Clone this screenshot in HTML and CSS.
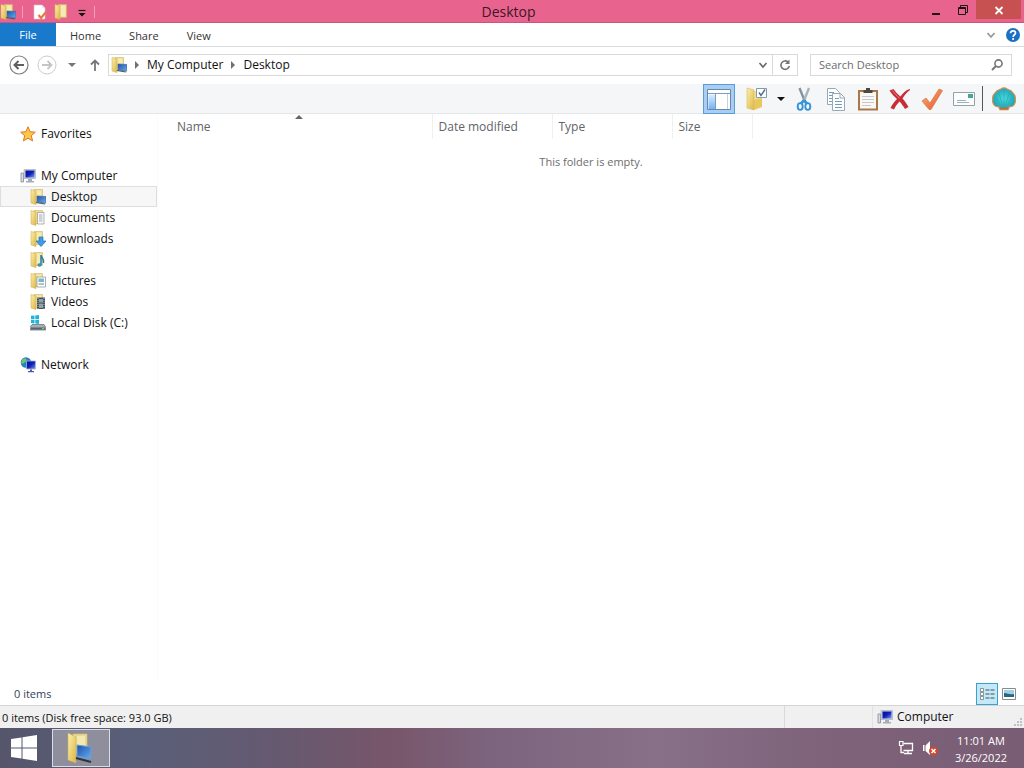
FILE: index.html
```html
<!DOCTYPE html>
<html lang="en">
<head>
    <meta charset="UTF-8">
    <meta name="viewport" content="width=device-width, initial-scale=1.0">
    <title>Desktop</title>
    <link rel="stylesheet" href="styles.css">
</head>
<body>
    <!-- Shared icons -->
    <svg class="sprite" aria-hidden="true">
        <defs>
            <linearGradient id="gold" x1="0" y1="0" x2="1" y2="1">
                <stop offset="0" stop-color="#fcf0a8"/>
                <stop offset="1" stop-color="#dcb648"/>
            </linearGradient>
            <linearGradient id="screen" x1="0" y1="0" x2="1" y2="1">
                <stop offset="0" stop-color="#1c4fac"/>
                <stop offset="1" stop-color="#68aef0"/>
            </linearGradient>
            <linearGradient id="navy" x1="0" y1="0" x2="1" y2="1">
                <stop offset="0" stop-color="#0808a0"/>
                <stop offset="0.5" stop-color="#1020b8"/>
                <stop offset="1" stop-color="#78a0f8"/>
            </linearGradient>
            <linearGradient id="orange" x1="0" y1="0" x2="1" y2="1">
                <stop offset="0" stop-color="#ffb070"/>
                <stop offset="1" stop-color="#dc5830"/>
            </linearGradient>
            <linearGradient id="pane" x1="0" y1="0" x2="0" y2="1">
                <stop offset="0" stop-color="#d8ecff"/>
                <stop offset="1" stop-color="#70b4f8"/>
            </linearGradient>
            <radialGradient id="aqua">
                <stop offset="0" stop-color="#48dce4"/>
                <stop offset="1" stop-color="#1ca4b4"/>
            </radialGradient>
        </defs>
        <symbol id="folder" viewBox="0 0 16 16">
            <path d="M4 .5h8.500v13H4z" fill="#ecd986" stroke="#d0b664" stroke-width=".6"/>
            <path d="M6.500 1.500h5v11h-5z" fill="#f6ebb4"/>
            <path d="M1 .5l5 1.500v13.500L1 14z" fill="url(#gold)" stroke="#d4b45c" stroke-width=".6"/>
        </symbol>
        <symbol id="folder-desktop" viewBox="0 0 16 16">
            <use href="#folder"/>
            <path d="M7 7l9 .5v6.500l-9-1z" fill="url(#screen)" stroke="#496a8c" stroke-width=".7"/>
            <path d="M6 13.500l9 1.500" stroke="#48586c" stroke-width="1.200"/>
        </symbol>
        <symbol id="computer" viewBox="0 0 16 16">
            <path d="M1 5h2.500v9H1z" fill="#d8dce2" stroke="#838b98" stroke-width=".8"/>
            <path d="M4 1.500h11.500v9H4z" fill="#ced4dd" stroke="#a0a8b4" stroke-width=".6"/>
            <path d="M5.500 2.500h9v7h-9z" fill="url(#navy)"/>
            <path d="M8 11h4v2H8zM6 13h8v1.500H6z" fill="#a6adb8"/>
        </symbol>
    </svg>

    <div class="window">
        <header class="titlebar">
            <div class="quick-access">
                <svg class="icon" viewBox="0 0 16 16"><use href="#folder-desktop"/></svg>
                <span class="divider"></span>
                <button type="button" aria-label="Properties">
                    <svg class="icon" viewBox="0 0 16 16"><path d="M2 1h8l3 3v11H2z" fill="#fff" stroke="#d9c4cc" stroke-width=".6"/><path d="M10 1v3h3" fill="#e4e4ea"/><path d="M6.500 11l2.500 3 5-6" fill="none" stroke="#e37b3c" stroke-width="2.200"/></svg>
                </button>
                <button type="button" aria-label="New folder">
                    <svg class="icon" viewBox="0 0 16 16"><use href="#folder"/></svg>
                </button>
                <button class="small" type="button" aria-label="Customize">
                    <svg class="icon" viewBox="0 0 16 16"><path d="M4.500 6.500h7" stroke="#111" stroke-width="1.200"/><path d="M4.500 9h7L8 12.500z" fill="#111"/></svg>
                </button>
                <span class="divider"></span>
            </div>
            <h1>Desktop</h1>
            <div class="window-controls">
                <button type="button" aria-label="Minimize"><svg class="icon" viewBox="0 0 16 16"><path d="M4 12h8" stroke="#1c1218" stroke-width="2"/></svg></button>
                <button type="button" aria-label="Restore"><svg class="icon" viewBox="0 0 16 16"><path d="M3.500 5.500h7v7h-7zM5.500 5V3.500h7v7H11M3.500 6.500h7" fill="none" stroke="#1c1218"/></svg></button>
                <button class="close" type="button" aria-label="Close"><svg class="icon" viewBox="0 0 16 16"><path d="M4.500 5l7 7M11.500 5l-7 7" stroke="#fff" stroke-width="1.800"/></svg></button>
            </div>
        </header>

        <nav class="ribbon">
            <button class="file" type="button">File</button>
            <button type="button">Home</button>
            <button type="button">Share</button>
            <button type="button">View</button>
            <div class="ribbon-end">
                <button type="button" aria-label="Expand ribbon"><svg class="icon" viewBox="0 0 16 16"><path d="M4.500 6L8 10l3.500-4" fill="none" stroke="#999" stroke-width="1.800"/></svg></button>
                <button type="button" aria-label="Help"><svg class="icon" viewBox="0 0 16 16"><circle cx="8" cy="8" r="7" fill="#1c70c4"/><path d="M5.500 6.200c0-3.200 5-3 5-.2 0 1.800-2.400 1.700-2.400 4" fill="none" stroke="#fff" stroke-width="1.700"/><circle cx="8.100" cy="12" r="1.100" fill="#fff"/></svg></button>
            </div>
        </nav>

        <div class="address-row">
            <button type="button" aria-label="Back"><svg class="icon-big" viewBox="0 0 20 20"><circle cx="10" cy="10" r="9" fill="#fff" stroke="#808080" stroke-width="1.200"/><path d="M15 10H6M9.500 6l-4 4 4 4" fill="none" stroke="#606060" stroke-width="2"/></svg></button>
            <button type="button" aria-label="Forward"><svg class="icon-big" viewBox="0 0 20 20"><circle cx="10" cy="10" r="9" fill="#fff" stroke="#ccc"/><path d="M5 10h9M10.500 6l4 4-4 4" fill="none" stroke="#c8c4c6" stroke-width="1.800"/></svg></button>
            <button type="button" aria-label="Recent locations"><svg class="icon" viewBox="0 0 16 16"><path d="M4 6h8l-4 4z" fill="#777"/></svg></button>
            <button type="button" aria-label="Up"><svg class="icon" viewBox="0 0 16 16"><path d="M8 14V4M4 7.500L8 3.500l4 4" fill="none" stroke="#777" stroke-width="1.800"/></svg></button>
            <div class="address">
                <svg class="icon" viewBox="0 0 16 16"><use href="#folder-desktop"/></svg>
                <svg class="arrow" viewBox="0 0 8 8"><path d="M2 0l4 4-4 4z" fill="#707070"/></svg>
                <a href="#">My Computer</a>
                <svg class="arrow" viewBox="0 0 8 8"><path d="M2 0l4 4-4 4z" fill="#707070"/></svg>
                <a href="#">Desktop</a>
                <button class="history" type="button" aria-label="Previous locations"><svg class="icon" viewBox="0 0 16 16"><path d="M4.500 6L8 10l3.500-4" fill="none" stroke="#666" stroke-width="1.600"/></svg></button>
                <button class="refresh" type="button" aria-label="Refresh"><svg class="icon" viewBox="0 0 16 16"><path d="M11 5a4.200 4.200 0 1 0 1.300 4" fill="none" stroke="#777" stroke-width="1.600"/><path d="M12.500 2.500v4.500H8z" fill="#777"/></svg></button>
            </div>
            <div class="search">
                <input type="text" aria-label="Search Desktop" placeholder="Search Desktop">
                <svg class="icon" viewBox="0 0 16 16"><circle cx="9.500" cy="6.500" r="3.600" fill="none" stroke="#777" stroke-width="1.600"/><path d="M7 9l-4 4" stroke="#777" stroke-width="2"/></svg>
            </div>
        </div>

        <div class="toolbar">
            <button class="active" type="button" aria-label="Navigation pane"><svg viewBox="0 0 24 24"><path d="M.5 2.500h23v20H.5z" fill="#fff" stroke="#6888a8"/><path d="M1.500 7.500H8V22H1.500z" fill="url(#pane)"/><path d="M1 6.500h22M8.500 7v15" stroke="#7f9cb8"/><path d="M20.500 7v15" stroke="#c4d4e4"/></svg></button>
            <button class="select" type="button" aria-label="Select"><svg viewBox="0 0 24 24"><path d="M8 4h8v15H8z" fill="#f0dfa0"/><path d="M9 13l8-2v9l-8 3z" fill="#e8c85c"/><path d="M2 1l7 2v20l-7-2z" fill="url(#gold)" stroke="#d8b85c" stroke-width=".6"/><path d="M11.500 1.500h10v9h-10z" fill="#fff" stroke="#829aaa"/><path d="M14 5.500l2 3 4-6" fill="none" stroke="#507088" stroke-width="1.500"/></svg></button>
            <button class="more" type="button" aria-label="Select options"><svg class="icon" viewBox="0 0 16 16"><path d="M4 6h8l-4 4z" fill="#111"/></svg></button>
            <button type="button" aria-label="Cut"><svg viewBox="0 0 24 24"><path d="M7.500 1l6 15" stroke="#8593a0" stroke-width="2.400"/><path d="M17 1l-6 15" stroke="#a8b3bd" stroke-width="2.400"/><path d="M12 13l-3.500 4M12 13l3.500 4" stroke="#3494d8" stroke-width="2.600"/><ellipse cx="8.200" cy="19.500" rx="2.500" ry="3.400" fill="none" stroke="#3494d8" stroke-width="1.900"/><ellipse cx="15.800" cy="19.500" rx="2.500" ry="3.400" fill="none" stroke="#3494d8" stroke-width="1.900"/></svg></button>
            <button type="button" aria-label="Copy"><svg viewBox="0 0 24 24"><g fill="#fff" stroke="#98a8b4"><path d="M3.500 1.500h8l4 4v12h-12z"/><path d="M8.500 6.500h8l4 4v13h-12z"/></g><path d="M16 6.500V11h4.500" fill="none" stroke="#98a8b4"/><path d="M5 5.500h5M5 8.500h3M5 11.500h3M5 14.500h3M11 11.500h4M11 14.500h7M11 17.500h7M11 20.500h7" stroke="#6f9dc4"/></svg></button>
            <button type="button" aria-label="Paste"><svg viewBox="0 0 24 24"><path d="M2 3h20v20.500H2z" fill="#a87848"/><path d="M4 5h16v16.500H4z" fill="#faf8f4"/><path d="M7.500 6V3H10V1h4v2h2.500v3z" fill="#4c4840"/><path d="M6 9.500h12M6 12.500h12M6 15.500h12M6 18.500h9" stroke="#c6c8cc"/></svg></button>
            <button type="button" aria-label="Delete"><svg viewBox="0 0 24 24"><path d="M1.500 3.500L5.500 2c2 3 4 5 7 7.500C15 6 18 3 22 2v1c-3 2-5.500 5-7.500 8.500 2 2 4 5 6 8.500l-3.500 2c-2-3-3.500-5.500-5.500-7.500-2.500 2.500-4 5-5.500 8L2.500 21c1.500-3.500 4-6.500 6.500-9-3-2.500-5-5-7.500-8.500z" fill="#c82c34"/><path d="M4.500 3.500c2 3 4 5 7 7.500" fill="none" stroke="#e88c8c"/></svg></button>
            <button type="button" aria-label="Rename"><svg viewBox="0 0 24 24"><path d="M2 14l4-3 4 5L19 2l3.500 1.500L11 22.500H9z" fill="url(#orange)" stroke="#e0784c" stroke-width=".8"/></svg></button>
            <button type="button" aria-label="E-mail"><svg viewBox="0 0 24 24"><path d="M1.500 5.500h21v13h-21z" fill="#fcfdfd" stroke="#98a0a4"/><path d="M16 7h5v4h-5z" fill="#48a49c"/><path d="M5 13.500h9M5 15.500h12" stroke="#9cb0bc"/></svg></button>
            <span class="toolbar-divider"></span>
            <button class="shell" type="button" aria-label="Classic Shell settings"><svg viewBox="0 0 24 24"><path d="M8 22.500l-1.500-3C3 20 0 17 .8 12 0 8 3 6 4 5c1-2 4-2 5-3 2-1.500 4-1.500 6 0 1 1 4 1 5 3 1 1 4 3 3.200 7 .8 5-2.200 8-5.700 7.500l-1.500 3z" fill="url(#aqua)" stroke="#c89058" stroke-width="1.300"/><path d="M12 21V4M11 20L7 6M13 20l4-14M9 19L4 10M15 19l5-9" stroke="#2ca8b0" stroke-width=".7"/><path d="M7.500 20.500h9l-1 2h-7z" fill="#b87040"/></svg></button>
        </div>

        <main class="content">
            <nav class="tree">
                <ul>
                    <li><a href="#"><svg class="icon" viewBox="0 0 16 16"><path d="M8 .8l2.100 4.900 5.200.5-4 3.500 1.300 5.200L8 12.200l-4.600 2.700 1.300-5.200-4-3.500 5.200-.5z" fill="#ffc64c" stroke="#dc7824" stroke-width="1"/></svg>Favorites</a></li>
                </ul>
                <ul>
                    <li><a href="#"><svg class="icon" viewBox="0 0 16 16"><use href="#computer"/></svg>My Computer</a></li>
                    <li><a class="child selected" href="#"><svg class="icon" viewBox="0 0 16 16"><use href="#folder-desktop"/></svg>Desktop</a></li>
                    <li><a class="child" href="#"><svg class="icon" viewBox="0 0 16 16"><use href="#folder"/><path d="M7.500 2.500h6.500v11.500H7.500z" fill="#fafafa" stroke="#929292" stroke-width=".7"/><path d="M9 5h3.500M9 7h3.500M9 9h3.500M9 11h3.500" stroke="#8c98a8" stroke-width=".8"/></svg>Documents</a></li>
                    <li><a class="child" href="#"><svg class="icon" viewBox="0 0 16 16"><use href="#folder"/><path d="M9 6h4v4h3l-5 5.500L6 10h3z" fill="#3c9ce4" stroke="#2070b4" stroke-width=".7"/></svg>Downloads</a></li>
                    <li><a class="child" href="#"><svg class="icon" viewBox="0 0 16 16"><use href="#folder"/><path d="M11 13V3c0 3 3.500 3 2.500 8" fill="none" stroke="#287ca4" stroke-width="1.500"/><ellipse cx="9.500" cy="13" rx="2.200" ry="1.700" fill="#3494bc"/></svg>Music</a></li>
                    <li><a class="child" href="#"><svg class="icon" viewBox="0 0 16 16"><use href="#folder"/><path d="M7 4h8.500v10H7z" fill="#fff" stroke="#7c8c98" stroke-width=".7"/><path d="M8.500 5.500H14V9H8.500z" fill="#7cb4cc"/><path d="M8.500 11H14" stroke="#688c70"/></svg>Pictures</a></li>
                    <li><a class="child" href="#"><svg class="icon" viewBox="0 0 16 16"><use href="#folder"/><path d="M7 3.500h8V15H7z" fill="#444c54"/><path d="M9 5h4v3.500H9zM9 9.500h4V14H9z" fill="#8ca4ac"/><path d="M8 4v11M14 4v11" stroke="#d4d8dc" stroke-width=".8" stroke-dasharray="1 1"/></svg>Videos</a></li>
                    <li><a class="child" href="#"><svg class="icon" viewBox="0 0 16 16"><path d="M1 .8l3.500-.3v3.700H1zM5.300.4l3.700-.4v4.200H5.300zM1 5h3.500v3.500L1 8zM5.300 5H9v4l-3.700-.4z" fill="#20b4d8"/><path d="M2 9.500h12l2 3v2.500H0v-2.500z" fill="#a4aeb4" stroke="#606c74" stroke-width=".7"/><path d="M1 12.500h14v2H1z" fill="#54646c"/><path d="M12 13.500h2" stroke="#50e870"/></svg>Local Disk (C:)</a></li>
                </ul>
                <ul>
                    <li><a href="#"><svg class="icon" viewBox="0 0 16 16"><circle cx="6" cy="5.500" r="5.300" fill="#2484bc"/><path d="M2 3c3-3 6-1 4 1.500-2 1-3 3-5 2zM6 6c3-1 3 2 1 4z" fill="#70c478"/><path d="M6.500 4h9v8h-9z" fill="url(#navy)" stroke="#a8b4d0" stroke-width=".8"/><path d="M10 12.500h2V14H10zM8 14h6v1.300H8z" fill="#505c98"/></svg>Network</a></li>
                </ul>
            </nav>
            <section class="files">
                <table>
                    <thead>
                        <tr>
                            <th class="name">Name<svg class="sort" viewBox="0 0 8 4"><path d="M0 4l4-4 4 4z" fill="#666"/></svg></th>
                            <th class="date">Date modified</th>
                            <th class="type">Type</th>
                            <th class="size">Size</th>
                            <th class="rest"></th>
                        </tr>
                    </thead>
                    <tbody>
                        <tr><td colspan="5">This folder is empty.</td></tr>
                    </tbody>
                </table>
            </section>
        </main>

        <div class="details">
            <span>0 items</span>
            <div class="view-modes">
                <button class="active" type="button" aria-label="Details view"><svg class="icon" viewBox="0 0 16 16"><path d="M1.500 2.500h3v3h-3zM1.500 6.500h3v3h-3zM1.500 10.500h3v3h-3z" fill="#fff" stroke="#6c7c84" stroke-width=".8"/><path d="M6.500 4h4M11.500 4h4M6.500 8h4M11.500 8h4M6.500 12h4M11.500 12h4" stroke="#405058"/></svg></button>
                <button type="button" aria-label="Thumbnail view"><svg class="icon" viewBox="0 0 16 16"><path d="M1.500 2.500h13v11h-13z" fill="#fff" stroke="#848c90"/><path d="M3 4h10v7H3z" fill="#9cd0e4"/><path d="M3 7c4 0 5 2 10 1v3H3z" fill="#2c647c"/></svg></button>
            </div>
        </div>

        <footer class="statusbar">
            <span class="status-text">0 items (Disk free space: 93.0 GB)</span>
            <span class="status-blank"></span>
            <span class="status-zone">
                <svg class="icon" viewBox="0 0 16 16"><use href="#computer"/></svg>Computer
                <svg class="grip" viewBox="0 0 10 10"><path d="M7 1h2v2H7zM4 4h2v2H4zM7 4h2v2H7zM1 7h2v2H1zM4 7h2v2H4zM7 7h2v2H7z" fill="#c0c0c0"/></svg>
            </span>
        </footer>
    </div>

    <div class="taskbar">
        <button class="start" type="button" aria-label="Start"><svg viewBox="0 0 28 28"><path d="M1 5l10.500-1.500v10H1zM12.500 3.300L27 1v12.500H12.500zM1 14.500h10.500v10L1 23zM12.500 14.500H27V27l-14.500-2.300z" fill="#fff"/></svg></button>
        <button class="task" type="button" aria-label="Desktop window"><svg viewBox="0 0 32 32"><path d="M8 2h14v20H8z" fill="#e9d88e" stroke="#d8c47c" stroke-width=".6"/><path d="M12 4h8v17h-8z" fill="#f3e8ae"/><path d="M3 1l8 4v26l-8-3z" fill="url(#gold)" stroke="#d2b45c" stroke-width=".6"/><path d="M12 13l14 2v12l-14-3z" fill="url(#screen)" stroke="#68a0d4"/><path d="M11 26l15 4" stroke="#283544" stroke-width="2"/></svg></button>
        <div class="tray">
            <button type="button" aria-label="Network"><svg class="icon" viewBox="0 0 16 16"><path d="M5.500 3.500h9v7h-9" fill="none" stroke="#fff" stroke-width="1.300"/><path d="M10 11v2M6 13.500h8M3 6v6.500h3" fill="none" stroke="#fff" stroke-width="1.300"/><path d="M1.500 1.500h3.500v4H1.500z" fill="#7c6078" stroke="#fff" stroke-width="1.200"/></svg></button>
            <button type="button" aria-label="Volume muted"><svg class="icon" viewBox="0 0 16 16"><path d="M1 5h1.500v6H1zM3.500 5.500L8 1v14l-4.500-4z" fill="#fff"/><circle cx="11.500" cy="11" r="4.500" fill="#d04830"/><path d="M9.500 9l4 4M13.500 9l-4 4" stroke="#fff" stroke-width="1.500"/></svg></button>
            <div class="clock"><time>11:01 AM</time><span>3/26/2022</span></div>
        </div>
    </div>
</body>
</html>
```
FILE: styles.css
```css
* {
    box-sizing: border-box;
}

body {
    margin: 0;
    min-height: 100vh;
    display: flex;
    flex-direction: column;
    font-family: "Open Sans", "Noto Sans", sans-serif;
    font-size: 12px;
    line-height: 16px;
    color: #111;
    background-color: #fff;
}

button {
    display: flex;
    align-items: center;
    justify-content: center;
    padding: 0;
    border: none;
    background: none;
    font: inherit;
    color: inherit;
}

a {
    color: inherit;
    text-decoration: none;
}

svg {
    display: block;
    flex: none;
}

.sprite {
    position: absolute;
    width: 0;
    height: 0;
}

.icon {
    width: 16px;
    height: 16px;
}

.window {
    flex: 1;
    display: flex;
    flex-direction: column;
}

/* Title bar */
.titlebar {
    display: grid;
    grid-template-columns: 1fr auto 1fr;
    height: 23px;
    padding-right: 3px;
    background-color: #e8648f;
    border-bottom: 1px solid #c9557c;
}

.titlebar h1 {
    margin: 0;
    padding-right: 4px;
    font-size: 14px;
    font-weight: 400;
    line-height: 23px;
    color: #3c1626;
}

.quick-access {
    display: flex;
    align-items: center;
    gap: 6px;
}

.quick-access .small {
    width: 12px;
}

.divider {
    width: 1px;
    height: 12px;
    background-color: #f0a0bc;
}

.quick-access .icon + .divider {
    margin-right: 3px;
}

.window-controls {
    display: flex;
    justify-content: flex-end;
}

.window-controls button {
    width: 27px;
    height: 19px;
}

.window-controls .close {
    width: 45px;
    background-color: #c75050;
}

/* Ribbon tabs */
.ribbon {
    display: flex;
    height: 24px;
    border-bottom: 1px solid #d8dadc;
    font-size: 11px;
    color: #333;
}

.ribbon button {
    padding: 2px 14px 0;
}

.ribbon .file {
    width: 56px;
    padding: 0;
    color: #fff;
    background-color: #1979ca;
}

.ribbon-end {
    display: flex;
    gap: 6px;
    margin-left: auto;
    padding-right: 3px;
}

.ribbon-end button {
    padding: 0;
}

/* Address bar */
.address-row {
    display: flex;
    align-items: center;
    gap: 8px;
    height: 37px;
    padding: 0 12px 1px 9px;
}

.address-row > button + button {
    margin-right: -1px;
}

.icon-big {
    width: 20px;
    height: 20px;
}

.address {
    flex: 1;
    display: flex;
    align-items: center;
    gap: 6px;
    height: 22px;
    margin-left: -2px;
    padding-left: 2px;
    border: 1px solid #d9d9d9;
}

.arrow {
    width: 8px;
    height: 8px;
}

.history {
    width: 18px;
    height: 20px;
    margin-left: auto;
}

.refresh {
    width: 25px;
    height: 20px;
    margin-left: -6px;
    border-left: 1px solid #d9d9d9;
}

.search {
    display: flex;
    align-items: center;
    width: 202px;
    height: 22px;
    margin-left: 4px;
    padding: 0 6px 0 8px;
    border: 1px solid #d9d9d9;
    font-size: 11px;
}

.search input {
    flex: 1;
    min-width: 0;
    padding: 0;
    border: none;
    outline: none;
    font: inherit;
}

.search input::placeholder {
    color: #6d6d6d;
    opacity: 1;
}

/* Toolbar */
.toolbar {
    display: flex;
    align-items: stretch;
    justify-content: flex-end;
    height: 30px;
    padding-right: 4px;
    background-color: #f5f6f7;
    border-bottom: 1px solid #e4e6e8;
}

.toolbar button {
    width: 32px;
    height: 30px;
}

.toolbar button svg {
    width: 24px;
    height: 24px;
}

.toolbar .active {
    background-color: #a9cef5;
    border: 1px solid #5a9bd8;
}

.toolbar .select {
    margin-left: 6px;
}

.toolbar .more {
    width: 15px;
}

.toolbar .more svg {
    width: 16px;
    height: 16px;
}

.toolbar-divider {
    width: 1px;
    margin: 2px 5px 2px 2px;
    background-color: #555;
}

/* Folder tree and file list */
.content {
    flex: 1;
    display: flex;
}

.tree {
    width: 158px;
    padding-top: 9px;
    border-right: 1px solid #fafafa;
}

.tree ul {
    list-style: none;
    margin: 0 0 21px;
    padding: 0;
}

.tree a {
    display: flex;
    align-items: center;
    gap: 5px;
    height: 21px;
    padding-left: 19px;
    border: 1px solid transparent;
}

.tree .child {
    padding-left: 29px;
}

.tree .selected {
    background-color: #f7f7f7;
    border-color: #dedede;
}

.files {
    flex: 1;
}

table {
    width: 100%;
    table-layout: fixed;
    border-collapse: collapse;
    color: #6d6d6d;
}

th {
    height: 17px;
    padding: 5px 6px 4px;
    border-right: 1px solid #f0f0f0;
    font-weight: 400;
    text-align: left;
    color: #606468;
}

.name {
    position: relative;
    width: 274px;
    padding-left: 19px;
}

.date,
.type {
    width: 120px;
}

.size {
    width: 80px;
}

.rest {
    border: none;
}

.sort {
    position: absolute;
    top: 1px;
    left: 50%;
    width: 8px;
    height: 4px;
}

td {
    padding: 15px 0 0;
    font-size: 11px;
    text-align: center;
}

/* Item count and view buttons */
.details {
    display: flex;
    align-items: center;
    justify-content: space-between;
    height: 23px;
    padding: 0 4px 0 14px;
    font-size: 11px;
    color: #33415c;
}

.view-modes {
    display: flex;
}

.view-modes button {
    width: 22px;
    height: 22px;
}

.view-modes .active {
    background-color: #c3e9f8;
    border: 1px solid #3ba2d0;
}

/* Status bar */
.statusbar {
    display: flex;
    height: 23px;
    background-color: #f0f0f0;
    border-top: 1px solid #d4d4d4;
    line-height: 24px;
}

.status-text {
    flex: 1;
    padding-left: 2px;
    font-size: 11px;
}

.status-blank {
    width: 88px;
    border-left: 1px solid #d9d9d9;
}

.status-zone {
    display: flex;
    align-items: center;
    gap: 4px;
    width: 152px;
    padding-left: 4px;
    border-left: 1px solid #e2e2e2;
}

.grip {
    width: 10px;
    height: 10px;
    margin: 0 1px 1px auto;
    align-self: flex-end;
}

/* Taskbar */
.taskbar {
    display: flex;
    align-items: center;
    height: 40px;
    background-image: linear-gradient(90deg, #55566c 0%, #5a5f79 14%, #655970 27%, #78566a 38%, #7c647e 48%, #877088 64%, #7e637a 80%, #795d74 100%);
    color: #fff;
}

.start {
    width: 48px;
    height: 40px;
}

.start svg {
    width: 28px;
    height: 28px;
}

.task {
    width: 58px;
    height: 38px;
    margin-left: 4px;
    border: 1px solid #dcdce2;
    background-color: #8e8e9c;
}

.task svg {
    width: 32px;
    height: 32px;
}

.tray {
    display: flex;
    align-items: center;
    gap: 8px;
    margin-left: auto;
    padding-right: 17px;
}

.clock {
    display: flex;
    flex-direction: column;
    align-items: center;
    margin-left: 9px;
    padding-top: 2px;
    font-size: 11px;
    line-height: 17px;
}
```
